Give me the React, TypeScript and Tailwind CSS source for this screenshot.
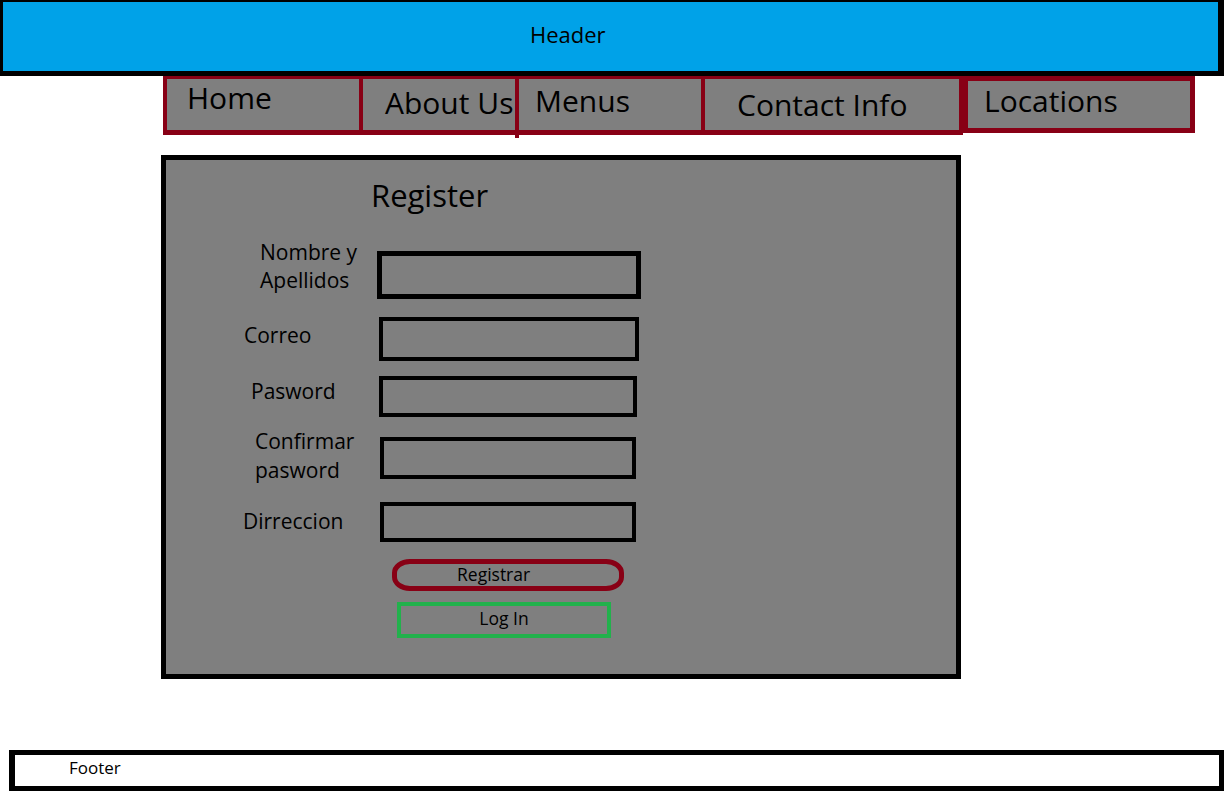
import React from 'react';

const navItems = [
  { label: 'Home', box: 'w-[200px] h-[59px] border-[#880015] border-x-[4px] border-t-[3px] border-b-[5px]', text: 'pl-[20px] pt-[4px]' },
  { label: 'About Us', box: 'w-[152px] h-[59px] border-[#880015] border-t-[3px] border-b-[5px]', text: 'pl-[22px] pt-[9px]' },
  { label: 'Menus', box: 'w-[190px] h-[59px] border-[#880015] border-x-[4px] border-t-[3px] border-b-[5px]', text: 'pl-[16px] pt-[7px]' },
  { label: 'Contact Info', box: 'w-[258px] h-[59px] border-[#880015] border-r-[4px] border-t-[3px] border-b-[5px]', text: 'pl-[32px] pt-[11px]' },
  { label: 'Locations', box: 'w-[232px] h-[57px] border-[#880015] border-[5px]', text: 'pl-[16px] pt-[5px]' },
];

const fields = [
  { label: ['Nombre y', 'Apellidos'], row: 'mt-[40px] h-[48px]', labelBox: 'w-[211px] pl-[94px] -mt-[13px] leading-[28px]', input: 'w-[264px] h-[48px] border-[5px]' },
  { label: ['Correo'], row: 'mt-[18px] h-[44px]', labelBox: 'w-[213px] pl-[78px] mt-[4px] leading-[29px]', input: 'w-[260px] h-[44px] border-[4px]' },
  { label: ['Pasword'], row: 'mt-[15px] h-[41px]', labelBox: 'w-[213px] pl-[85px] mt-[1px] leading-[29px]', input: 'w-[258px] h-[41px] border-[4px]' },
  { label: ['Confirmar', 'pasword'], row: 'mt-[20px] h-[42px]', labelBox: 'w-[214px] pl-[89px] -mt-[10px] leading-[29px]', input: 'w-[256px] h-[42px] border-[4px]' },
  { label: ['Dirreccion'], row: 'mt-[23px] h-[40px]', labelBox: 'w-[214px] pl-[77px] mt-[5px] leading-[29px]', input: 'w-[256px] h-[40px] border-[4px]' },
];

export default function App() {
  return (
    <div className="w-[1224px] min-h-[803px] bg-white text-black font-['Open_Sans',sans-serif]">
      <header className="h-[76px] bg-[#00a2e8] border-black border-t-[2px] border-l-[3px] border-r-[6px] border-b-[5px] pl-[527px] pt-[21px]">
        <span className="text-[22px] leading-[22px]">Header</span>
      </header>

      <nav className="flex items-start ml-[163px]">
        {navItems.map((item) => (
          <div key={item.label} className={`relative bg-[#7f7f7f] ${item.box}`}>
            <div className={`text-[30px] leading-[30px] whitespace-nowrap ${item.text}`}>{item.label}</div>
            {item.label === 'Menus' && (
              <span className="absolute -left-[4px] -bottom-[8px] w-[4px] h-[4px] bg-[#880015]" />
            )}
          </div>
        ))}
      </nav>

      <main className="ml-[161px] mt-[20px] w-[800px] h-[524px] border-[5px] border-black bg-[#7f7f7f]">
        <h1 className="mt-[20px] pl-[205px] text-[31px] leading-[31px]">Register</h1>

        {fields.map((f) => (
          <div key={f.label[0]} className={`flex items-start ${f.row}`}>
            <div className={`text-[21px] ${f.labelBox}`}>
              {f.label.map((line) => (
                <div key={line}>{line}</div>
              ))}
            </div>
            <input className={`border-black bg-transparent outline-none ${f.input}`} />
          </div>
        ))}

        <button className="block ml-[226px] mt-[17px] w-[232px] h-[32px] border-[5px] border-[#880015] rounded-[18px/14px] text-left pl-[60px] pb-[4px] text-[17.5px] leading-[20px]">
          Registrar
        </button>
        <button className="block ml-[231px] mt-[11px] w-[214px] h-[36px] border-[4px] border-[#22b14c] text-center pb-[4px] text-[17.5px] leading-[20px]">
          Log In
        </button>
      </main>

      <footer className="ml-[9px] mt-[71px] w-[1215px] h-[41px] border-black border-[5px] border-l-[6px] pl-[54px] flex items-center bg-white">
        <span className="text-[17px] leading-[20px] -mt-[5px]">Footer</span>
      </footer>
    </div>
  );
}
